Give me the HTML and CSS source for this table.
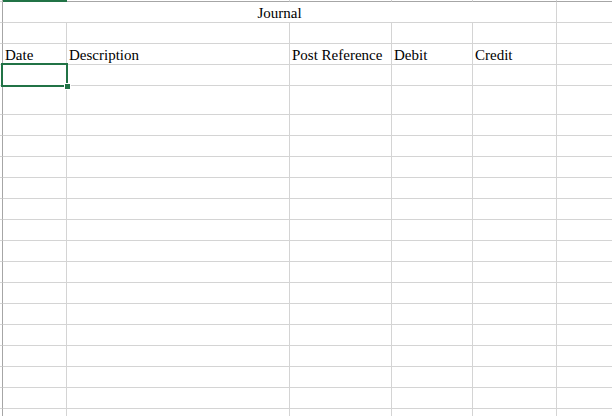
FILE: index.html
```html
<!DOCTYPE html>
<html lang="en">
<head>
<meta charset="utf-8">
<title>Journal</title>
<link rel="stylesheet" href="styles.css">
</head>
<body>
<div class="sheet">
  <div class="grid">
    <!-- column header remnant -->
    <div class="hd stub"></div>
    <div class="hd hd-sel"></div>
    <div class="hd"></div>
    <div class="hd"></div>
    <div class="hd"></div>
    <div class="hd"></div>
    <div class="hd hd-last"></div>

    <!-- row 1 -->
    <div class="stub"></div>
    <div class="cell merged center">Journal</div>
    <div class="cell last"></div>

    <!-- row 2 -->
    <div class="stub"></div><div class="cell"></div><div class="cell"></div><div class="cell"></div><div class="cell"></div><div class="cell"></div><div class="cell last"></div>

    <!-- row 3 -->
    <div class="stub"></div>
    <div class="cell">Date</div>
    <div class="cell">Description</div>
    <div class="cell">Post Reference</div>
    <div class="cell">Debit</div>
    <div class="cell">Credit</div>
    <div class="cell last"></div>

    <!-- rows 4 - 20 -->
    <div class="stub"></div><div class="cell"></div><div class="cell"></div><div class="cell"></div><div class="cell"></div><div class="cell"></div><div class="cell last"></div>
    <div class="stub"></div><div class="cell"></div><div class="cell"></div><div class="cell"></div><div class="cell"></div><div class="cell"></div><div class="cell last"></div>
    <div class="stub"></div><div class="cell"></div><div class="cell"></div><div class="cell"></div><div class="cell"></div><div class="cell"></div><div class="cell last"></div>
    <div class="stub"></div><div class="cell"></div><div class="cell"></div><div class="cell"></div><div class="cell"></div><div class="cell"></div><div class="cell last"></div>
    <div class="stub"></div><div class="cell"></div><div class="cell"></div><div class="cell"></div><div class="cell"></div><div class="cell"></div><div class="cell last"></div>
    <div class="stub"></div><div class="cell"></div><div class="cell"></div><div class="cell"></div><div class="cell"></div><div class="cell"></div><div class="cell last"></div>
    <div class="stub"></div><div class="cell"></div><div class="cell"></div><div class="cell"></div><div class="cell"></div><div class="cell"></div><div class="cell last"></div>
    <div class="stub"></div><div class="cell"></div><div class="cell"></div><div class="cell"></div><div class="cell"></div><div class="cell"></div><div class="cell last"></div>
    <div class="stub"></div><div class="cell"></div><div class="cell"></div><div class="cell"></div><div class="cell"></div><div class="cell"></div><div class="cell last"></div>
    <div class="stub"></div><div class="cell"></div><div class="cell"></div><div class="cell"></div><div class="cell"></div><div class="cell"></div><div class="cell last"></div>
    <div class="stub"></div><div class="cell"></div><div class="cell"></div><div class="cell"></div><div class="cell"></div><div class="cell"></div><div class="cell last"></div>
    <div class="stub"></div><div class="cell"></div><div class="cell"></div><div class="cell"></div><div class="cell"></div><div class="cell"></div><div class="cell last"></div>
    <div class="stub"></div><div class="cell"></div><div class="cell"></div><div class="cell"></div><div class="cell"></div><div class="cell"></div><div class="cell last"></div>
    <div class="stub"></div><div class="cell"></div><div class="cell"></div><div class="cell"></div><div class="cell"></div><div class="cell"></div><div class="cell last"></div>
    <div class="stub"></div><div class="cell"></div><div class="cell"></div><div class="cell"></div><div class="cell"></div><div class="cell"></div><div class="cell last"></div>
    <div class="stub"></div><div class="cell"></div><div class="cell"></div><div class="cell"></div><div class="cell"></div><div class="cell"></div><div class="cell last"></div>
    <div class="stub"></div><div class="cell"></div><div class="cell"></div><div class="cell"></div><div class="cell"></div><div class="cell"></div><div class="cell last"></div>
  </div>

  <div class="selection"><span class="handle"></span></div>
</div>
</body>
</html>
```

FILE: styles.css
```css
* { box-sizing: border-box; }

html, body {
  margin: 0;
  padding: 0;
  background: #ffffff;
  overflow: hidden;
}

.sheet {
  position: relative;
  width: 612px;
  height: 416px;
  overflow: hidden;
  font-family: "Liberation Serif", "Times New Roman", serif;
  font-size: 15px;
  color: #000000;
}

.grid {
  display: grid;
  grid-template-columns: 3px 64px 223px 102px 81px 84px 1fr;
  grid-template-rows: 2px 21px 21px 21px 21px 29px repeat(15, 21px);
}

/* column header remnant along the top */
.hd {
  border-right: 1px solid #d4d4d4;
  border-bottom: 1px solid #a6a6a6;
}
.hd.stub {
  border-right: 1px solid #a6a6a6;
}
.hd-sel {
  background: #217346;
  border-bottom: none;
  border-right: none;
}
.hd-last {
  border-right: none;
}

/* row header remnant along the left */
.stub {
  border-right: 1px solid #a6a6a6;
  border-bottom: 1px solid #d4d4d4;
}

.cell {
  display: flex;
  align-items: flex-end;
  padding: 0 2px 0;
  line-height: 17px;
  white-space: nowrap;
  border-right: 1px solid #d4d4d4;
  border-bottom: 1px solid #d4d4d4;
}
.cell.last {
  border-right: none;
}
.merged {
  grid-column: 2 / 7;
}
.center {
  justify-content: center;
}

/* active cell A4 */
.selection {
  position: absolute;
  left: 1px;
  top: 63px;
  width: 67px;
  height: 24px;
  border: 2px solid #217346;
}
.handle {
  position: absolute;
  right: -5px;
  bottom: -5px;
  width: 7px;
  height: 7px;
  background: #217346;
  border: 1px solid #ffffff;
}
```
